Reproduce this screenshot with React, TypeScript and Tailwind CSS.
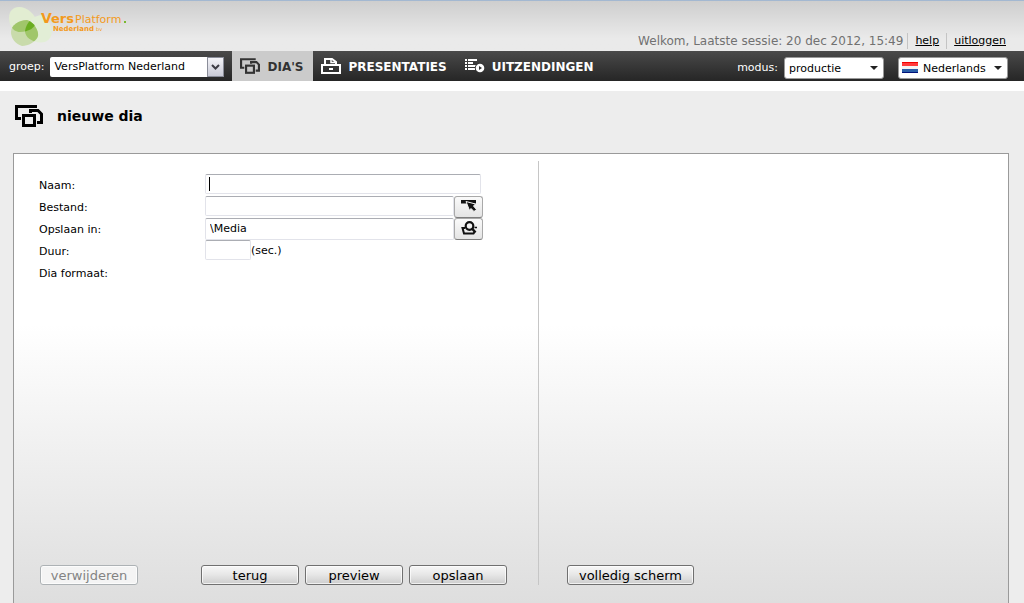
import type { ReactNode } from "react";

const leafTop = "M19 6C27 6 36 14 36 20C36 27 28 31 20 31C13 31 9 24 9 17C9 10 13 6 19 6Z";
const leafRight = "M41 14C47 14 49 19 51 27C53 34 50 39 45 41C36 43 25 38 25 30C26 22 33 15 41 14Z";
const leafBottom = "M11 31C11 24 19 19 27 19C34 21 39 30 38 35C36 41 28 45 22 45C15 43 11 37 11 31Z";

function Logo() {
  return (
    <svg width="130" height="48" viewBox="0 0 130 48" role="img" aria-label="VersPlatform Nederland">
      <defs>
        <clipPath id="leaf-top"><path d={leafTop} /></clipPath>
        <clipPath id="leaf-bottom"><path d={leafBottom} /></clipPath>
      </defs>
      <path d={leafTop} fill="#e2edd2" />
      <path d={leafRight} fill="#e2eed6" />
      <path d={leafBottom} fill="#c9dbab" />
      <g clipPath="url(#leaf-bottom)">
        <path d={leafTop} fill="#a0c66a" />
        <path d={leafRight} fill="#a0c66a" />
        <g clipPath="url(#leaf-top)">
          <path d={leafRight} fill="#6aad20" />
        </g>
      </g>
      <g fill="#f39a1c" fontFamily="'DejaVu Sans', sans-serif">
        <text x="41" y="22" fontSize="14" fontWeight="700">V</text>
        <text x="51" y="22" fontSize="13" fontWeight="700">ers</text>
        <text x="75" y="22" fontSize="11">Platform</text>
        <text x="53" y="30" fontSize="7" fontWeight="700">Nederland</text>
        <text x="96" y="30" fontSize="5">bv</text>
      </g>
      <rect x="124" y="20" width="2" height="2" fill="#7ab82e" />
    </svg>
  );
}

function SlidesIcon({ className }: { className: string }) {
  return (
    <svg viewBox="0 0 28 22" className={className} fill="none" stroke="currentColor" strokeWidth="3" aria-hidden="true">
      <path d="M22 1.5H1.5V13.5H6" />
      <path d="M15.500 8V5.500H23L26.500 9V17.500H22" />
      <rect x="8.500" y="10.500" width="11" height="10" />
    </svg>
  );
}

function DrawerIcon() {
  return (
    <svg width="20" height="16" viewBox="0 0 20 16" fill="none" stroke="currentColor" strokeWidth="2" aria-hidden="true">
      <rect x="1" y="7" width="18" height="8" />
      <path d="M4 7V1H11L15 4V7" />
      <path d="M10 1V4.500H14" strokeWidth="1.500" />
      <path d="M8 11H12" />
    </svg>
  );
}

function BroadcastIcon() {
  return (
    <svg width="20" height="14" viewBox="0 0 20 14" fill="currentColor" aria-hidden="true">
      <path d="M0 0H2V2H0ZM0 3H2V5H0ZM0 6H2V8H0ZM0 9H2V11H0ZM3 0H12V2H3ZM3 3H8V5H3ZM3 6H11V8H3ZM3 9H10V11H3Z" />
      <circle cx="15" cy="9" r="5.200" fill="#343434" />
      <circle cx="15" cy="9" r="4.300" />
      <path d="M14 7L17 9L14 11Z" fill="#343434" />
    </svg>
  );
}

function PickFileIcon() {
  return (
    <svg width="16" height="12" viewBox="0 0 16 12" aria-hidden="true">
      <path d="M0 0H15V3.500H0Z" fill="#111" />
      <path d="M5 1.500L14.500 4L12.500 6L15.500 9.500L13 11.500L10 8.500L8.500 10.500Z" fill="#111" stroke="#f3f3f3" strokeWidth="1" />
    </svg>
  );
}

function FindFolderIcon() {
  return (
    <svg width="16" height="14" viewBox="0 0 16 14" fill="none" stroke="#111" aria-hidden="true">
      <path d="M4 7H1.500L3 12.500H12.500L13.500 11" strokeWidth="2" />
      <circle cx="8.500" cy="5" r="3.800" strokeWidth="2.200" />
      <path d="M11 7.500L14.500 11.500" strokeWidth="2.500" />
      <path d="M13.500 6.500H16" strokeWidth="1.500" />
    </svg>
  );
}

function FlagIcon() {
  return (
    <svg width="16" height="11" viewBox="0 0 16 11" aria-hidden="true" className="pointer-events-none absolute top-[5px] left-1">
      <path d="M0 0H16V4H0Z" fill="#ff3b3b" />
      <path d="M0 4H16V7H0Z" fill="#f4f4f4" />
      <path d="M0 7H16V11H0Z" fill="#2a5ea8" />
      <path d="M0 0H16V1H0Z" fill="#f00000" />
      <path d="M0 10H16V11H0Z" fill="#00127a" />
    </svg>
  );
}

function Caret() {
  return (
    <svg width="8" height="4" viewBox="0 0 8 4" aria-hidden="true" className="pointer-events-none absolute top-[9px] right-1.5">
      <path d="M0 0H8L4 4Z" fill="#222" />
    </svg>
  );
}

function NavLink({ icon, active, children }: { icon: ReactNode; active?: boolean; children: ReactNode }) {
  return (
    <a
      href="#"
      aria-current={active ? "page" : undefined}
      className={
        active
          ? "flex items-center gap-[7px] bg-[#cbcbcb] pr-2.5 pl-2 text-[#333]"
          : "flex items-center gap-[7px] pr-2.5 pl-2 text-white"
      }
    >
      <span className="flex h-5 w-5 items-center">{icon}</span>
      <span className="pt-0.5">{children}</span>
    </a>
  );
}

function ActionButton({ className, disabled, children }: { className: string; disabled?: boolean; children: ReactNode }) {
  return (
    <button
      type="button"
      disabled={disabled}
      className={
        "h-5 rounded-[3px] border border-[#707070] bg-linear-to-b from-[#f4f4f4] from-10% via-[#e6e6e6] to-[#cdcdcd] pt-0.5 text-[13px] leading-4 text-black inset-ring inset-ring-white/70 disabled:border-[#adb2b5] disabled:bg-none disabled:bg-[#f4f4f4] disabled:text-[#838383] " +
        className
      }
    >
      {children}
    </button>
  );
}

const field = "rounded-[2px] border border-[#e2e3ea] border-t-[#abadb3] bg-white px-1 text-[11px] text-black outline-none";
const iconButton =
  "flex h-[22px] w-[29px] items-center justify-center rounded-[3px] border border-[#a9a9a9] border-b-[#7d7d7d] bg-linear-to-b from-[#fafafa] to-[#e4e4e4] pb-0.5";
const row = "flex h-[22px] items-start leading-[22px]";
const label = "w-[166px] shrink-0 pt-px";

export default function App() {
  return (
    <div className="flex min-h-screen flex-col bg-[#ededed] font-['DejaVu_Sans','Liberation_Sans',sans-serif] text-[11px] text-black">
      <header className="flex h-[51px] items-end justify-between border-t border-[#a3b8d1] bg-linear-to-b from-[#cecece] to-[#eaeaea] to-75% pr-[18px]">
        <div className="self-start">
          <Logo />
        </div>
        <div className="flex pb-0.5 text-[12px] leading-4 text-[#717171]">
          <span className="pr-1">Welkom, Laatste sessie: 20 dec 2012, 15:49</span>
          <a href="#" className="border-l border-[#c4c4c4] px-[7px] text-[11px] leading-4 text-black underline">help</a>
          <a href="#" className="border-l border-[#c4c4c4] pl-[7px] text-[11px] leading-4 text-black underline">uitloggen</a>
        </div>
      </header>

      <nav className="flex h-[30px] items-stretch justify-between bg-linear-to-b from-[#4a4a4a] to-[#262626] pr-4 pl-[9px] text-white">
        <div className="flex items-stretch">
          <div className="flex items-center gap-1.5 pt-0.5 pr-2">
            <label htmlFor="groep">groep:</label>
            <div className="relative">
              <select id="groep" className="block h-5 w-[174px] appearance-none rounded-[2px] bg-white pt-px pl-1 text-[11px] text-black">
                <option>VersPlatform Nederland</option>
              </select>
              <span className="pointer-events-none absolute top-0 right-0 flex h-5 w-[17px] items-center justify-center border border-[#8a8d99] bg-linear-to-b from-[#f4f4f8] to-[#c9cad6]">
                <svg width="9" height="6" viewBox="0 0 9 6" fill="none" stroke="#3c3c44" strokeWidth="2" aria-hidden="true">
                  <path d="M1 1L4.500 4.500L8 1" />
                </svg>
              </span>
            </div>
          </div>
          <div className="flex items-stretch text-[12px] font-bold">
            <NavLink active icon={<SlidesIcon className="h-4 w-5" />}>DIA'S</NavLink>
            <NavLink icon={<DrawerIcon />}>PRESENTATIES</NavLink>
            <NavLink icon={<BroadcastIcon />}>UITZENDINGEN</NavLink>
          </div>
        </div>
        <div className="flex items-center pt-1">
          <label htmlFor="modus" className="pr-1.5">modus:</label>
          <div className="relative mr-3.5">
            <select id="modus" className="block h-[22px] w-[100px] appearance-none rounded-[3px] border border-[#999] bg-white pt-0.5 pl-1 text-[11px] text-black">
              <option>productie</option>
            </select>
            <Caret />
          </div>
          <div className="relative">
            <select aria-label="Taal" className="block h-[22px] w-[110px] appearance-none rounded-[3px] border border-[#999] bg-white pt-0.5 pl-6 text-[11px] text-black">
              <option>Nederlands</option>
            </select>
            <FlagIcon />
            <Caret />
          </div>
        </div>
      </nav>

      <main className="flex grow flex-col border-t-10 border-white px-[13px]">
        <h1 className="flex items-center gap-3.5 pt-[13px] pb-[25px] pl-0.5 text-[14px] leading-6 font-bold">
          <SlidesIcon className="h-[22px] w-7" />
          nieuwe dia
        </h1>

        <form className="mr-0.5 grid grow grid-cols-[524fr_470fr] border border-b-0 border-[#9a9a9a] bg-linear-to-b from-white from-38% to-[#dedede] pt-[7px] pb-[18px]">
          <div className="flex flex-col justify-between gap-8 pt-[13px] pr-[31px] pl-[26px]">
            <div className="-ml-px flex flex-col">
              <div className={row}>
                <label htmlFor="naam" className={label}>Naam:</label>
                <div className="relative">
                  <input id="naam" type="text" className={"block h-5 w-[276px] caret-transparent " + field} />
                  <span className="pointer-events-none absolute top-[3px] left-1 h-3.5 w-px bg-black" />
                </div>
              </div>
              <div className={row}>
                <label htmlFor="bestand" className={label}>Bestand:</label>
                <input id="bestand" type="text" className={"h-5 w-[249px] " + field} />
                <button type="button" aria-label="Bestand kiezen" className={iconButton}><PickFileIcon /></button>
              </div>
              <div className={row}>
                <label htmlFor="map" className={label}>Opslaan in:</label>
                <input id="map" type="text" defaultValue="\Media" className={"h-[22px] w-[249px] " + field} />
                <button type="button" aria-label="Map zoeken" className={iconButton}><FindFolderIcon /></button>
              </div>
              <div className={row}>
                <label htmlFor="duur" className={label}>Duur:</label>
                <input id="duur" type="text" className={"h-5 w-[46px] " + field} />
                <span>(sec.)</span>
              </div>
              <div className={row}>
                <span className={label}>Dia formaat:</span>
              </div>
            </div>
            <div className="flex items-center gap-1.5">
              <ActionButton disabled className="mr-auto w-[98px]">verwijderen</ActionButton>
              <ActionButton className="w-[98px]">terug</ActionButton>
              <ActionButton className="w-[98px]">preview</ActionButton>
              <ActionButton className="w-[98px]">opslaan</ActionButton>
            </div>
          </div>
          <div className="flex flex-col items-start justify-end border-l border-[#c6c6c6] pl-7">
            <ActionButton className="w-[127px]">volledig scherm</ActionButton>
          </div>
        </form>
      </main>
    </div>
  );
}
